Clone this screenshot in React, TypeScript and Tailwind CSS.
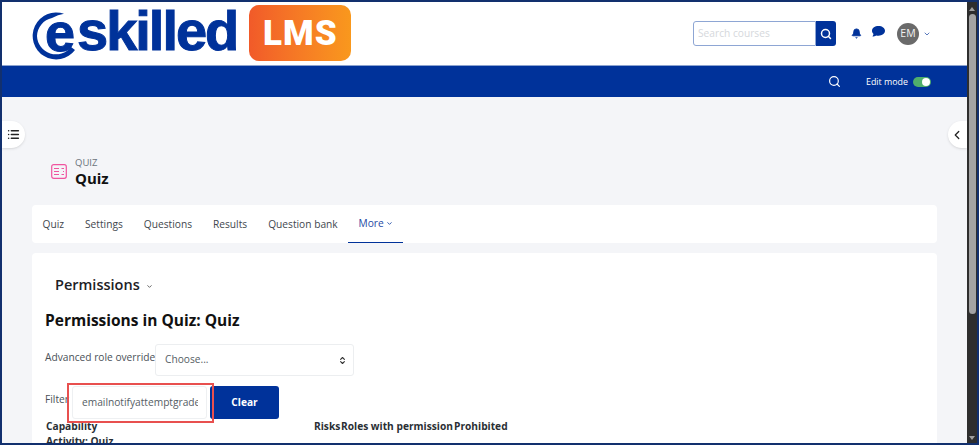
import React from 'react';
import { Bell, ChevronDown, ChevronLeft, ChevronsUpDown, List, Search } from 'lucide-react';

const tabs = ['Quiz', 'Settings', 'Questions', 'Results', 'Question bank'];

const Logo = () => (
  <div className="flex items-start">
    <div className="flex items-center h-[56px] ml-[29px] mt-[3px]">
      <div className="relative w-[49px] h-[48px] mt-[6px] flex items-center justify-center">
        <svg width="49" height="48" viewBox="0 0 49 48" className="absolute inset-0" fill="#00329a">
          <path d="M33 1.8A23.5 23.5 0 1 0 44 38L40 35A19 19 0 0 1 6 24A19 19 0 0 1 21 6Q27 2.5 33 1.8Z" />
        </svg>
        <span className="text-[#00329a] font-bold text-[54px] leading-none mt-[-9px] ml-[9px] font-['Liberation_Sans'] [-webkit-text-stroke:1px_#00329a]">e</span>
      </div>
      <span className="text-[#00329a] font-bold text-[56px] leading-none tracking-[-2px] ml-[-3px] mt-[-4px] font-['Liberation_Sans'] [-webkit-text-stroke:1px_#00329a]">skilled</span>
    </div>
    <div className="ml-[12px] mt-[3px] w-[102px] h-[56px] rounded-[10px] bg-gradient-to-r from-[#f15a29] to-[#f9981d] flex items-center justify-center">
      <span className="text-white font-black text-[35px] leading-none tracking-[1px] font-['Roboto']">LMS</span>
    </div>
  </div>
);

const QuizIcon = () => (
  <svg width="16" height="15" viewBox="0 0 16 15" fill="none" stroke="#f0559f" strokeWidth="1.2">
    <rect x="0.7" y="0.7" width="14.6" height="13.6" rx="2" />
    <path d="M3 4.5h5M3 7.5h5M3 10.5h5M10.5 4.5h2.5M12 7.5h1M10.5 10.5h2.5" />
  </svg>
);

export default function App() {
  return (
    <div className="w-[979px] h-[445px] overflow-hidden flex border-2 border-[#12306e] font-['Open_Sans',sans-serif] text-[#1d2125] bg-[#f4f5f8]">
      <div className="flex-1 min-w-0 flex flex-col relative">
        {/* top header */}
        <header className="h-[64px] shrink-0 bg-white border-b border-[#8ca3cf] flex items-start justify-between">
          <Logo />
          <div className="flex items-center mt-[19px] mr-[36px]">
            <div className="flex h-[25px] w-[143px]">
              <div className="flex-1 border border-[#8ea6d4] rounded-l-[3px] px-[4px] text-[10.2px] leading-[23px] text-[#d5d8dc]">Search courses</div>
              <div className="w-[20px] bg-[#00329a] rounded-r-[3px] flex items-center justify-center">
                <Search size={12} strokeWidth={3} className="text-white" />
              </div>
            </div>
            <Bell size={11} fill="#00329a" className="text-[#00329a] ml-[15px]" />
            <svg width="13" height="11" viewBox="0 0 13 11" fill="#00329a" className="ml-[10px] mt-[-4px]">
              <path d="M6.5 0C3 0 0 2 0 4.8c0 1.2.6 2.3 1.5 3.1C1.3 9 .6 10 .4 10.6c1.4 0 2.9-.6 3.7-1.2.7.2 1.5.3 2.4.3 3.6 0 6.5-2.2 6.5-4.9S10.1 0 6.5 0z" />
            </svg>
            <div className="ml-[12px] w-[22px] h-[22px] rounded-full bg-[#6a6a6a] text-[#f2f2f2] text-[10.5px] flex items-center justify-center">EM</div>
            <ChevronDown size={8} strokeWidth={2.5} className="text-[#3a5fb0] ml-[4px]" />
          </div>
        </header>

        {/* blue bar */}
        <div className="h-[31px] shrink-0 bg-[#00329a] flex items-center justify-end text-white">
          <Search size={13} strokeWidth={2.2} />
          <span className="text-[8.9px] ml-[25px] whitespace-nowrap">Edit mode</span>
          <div className="ml-[5px] mr-[36px] w-[18px] h-[10px] rounded-full bg-[#4fae6c] flex items-center justify-end pr-[1px]">
            <div className="w-[8px] h-[8px] rounded-full bg-white" />
          </div>
        </div>

        {/* drawer toggles */}
        <div className="absolute left-0 top-[119px] w-[23px] h-[27px] bg-white rounded-r-full flex items-center pl-[5px] shadow-sm">
          <List size={13} strokeWidth={2.8} className="text-[#222]" />
        </div>
        <div className="absolute right-0 top-[119px] w-[19px] h-[27px] bg-white rounded-l-full flex items-center pl-[2px] shadow-sm">
          <ChevronLeft size={14} strokeWidth={2.2} className="text-[#222]" />
        </div>

        <main className="flex-1 min-h-0 px-[30px]">
          <div className="flex items-center pl-[19px] pt-[40px] h-[108px]">
            <QuizIcon />
            <div className="ml-[8px]">
              <div className="text-[9.5px] leading-[13px] text-[#6a737b]">QUIZ</div>
              <div className="text-[15px] leading-[18px] font-bold text-[#111]">Quiz</div>
            </div>
          </div>

          {/* tabs */}
          <nav className="h-[38px] bg-white rounded-[4px] flex text-[10.2px] text-[#3f474e] w-[905px]">
            {tabs.map(t => (
              <div key={t} className="px-[10.5px] leading-[38px] whitespace-nowrap">{t}</div>
            ))}
            <div className="w-[55px] h-[38px] border-b-[1.5px] border-[#00329a] text-[#1f4aa5] flex items-center justify-center gap-[2px]">
              More <ChevronDown size={7} strokeWidth={3} />
            </div>
          </nav>

          {/* permissions card */}
          <section className="mt-[10px] w-[905px] h-[300px] bg-white rounded-t-[4px] pl-[13px]">
            <div className="flex items-center pl-[10px] pt-[22px]">
              <span className="text-[14.5px] leading-[20px] font-semibold text-[#1d2125]">Permissions</span>
              <ChevronDown size={7} strokeWidth={3} className="ml-[6px] mt-[3px] text-[#555]" />
            </div>
            <h2 className="mt-[14px] text-[15.5px] leading-[22px] font-bold text-[#111]">Permissions in Quiz: Quiz</h2>
            <div className="flex items-center mt-[13px]">
              <span className="text-[10.2px] w-[110px] whitespace-nowrap text-[#4a5157] mt-[-5px]">Advanced role override</span>
              <div className="w-[199px] h-[32px] bg-white border border-[#eceef0] rounded-[3px] flex items-center justify-between pl-[9px] pr-[6px] text-[10.2px] text-[#555d64]">
                Choose...
                <ChevronsUpDown size={9} strokeWidth={3} className="text-[#333]" />
              </div>
            </div>
            <div className="flex items-start mt-[10px]">
              <span className="text-[10.2px] w-[27px] text-[#4a5157] mt-[6px]">Filter</span>
              <div className="relative w-[135px] h-[33px] bg-white border border-[#eef0f2] rounded-[3px] pl-[9px] pr-[8px]">
                <div className="overflow-hidden whitespace-nowrap text-[10.2px] leading-[31px] text-[#555d64]">emailnotifyattemptgrade</div>
                <div className="absolute left-[-6px] top-[-4px] w-[147px] h-[40px] border-2 border-[#e8504f]" />
              </div>
              <button className="ml-[3px] w-[69px] h-[33px] bg-[#00329a] text-white text-[10.2px] font-bold rounded-[3px]">Clear</button>
            </div>
            <div className="flex text-[10.2px] leading-[14px] font-bold text-[#2a2f34] whitespace-nowrap">
              <span className="w-[269px] pl-[1px]">Capability</span>
              <span className="w-[27px]">Risks</span>
              <span className="w-[113px]">Roles with permission</span>
              <span>Prohibited</span>
            </div>
            <div className="mt-[1px] text-[10.2px] leading-[14px] font-bold text-[#2a2f34] pl-[1px]">Activity: Quiz</div>
          </section>
        </main>
      </div>

      {/* scrollbar */}
      <div className="w-[10px] shrink-0 bg-[#2e2e2e] flex flex-col items-center">
        <div className="mt-[5px] w-0 h-0 border-x-[3.5px] border-x-transparent border-b-[4px] border-b-[#a0a0a0]" />
        <div className="mt-[3px] w-[7px] h-[300px] rounded-full bg-[#a3a3a3]" />
        <div className="mt-auto mb-[3px] w-0 h-0 border-x-[3.5px] border-x-transparent border-t-[4px] border-t-[#a0a0a0]" />
      </div>
    </div>
  );
}
